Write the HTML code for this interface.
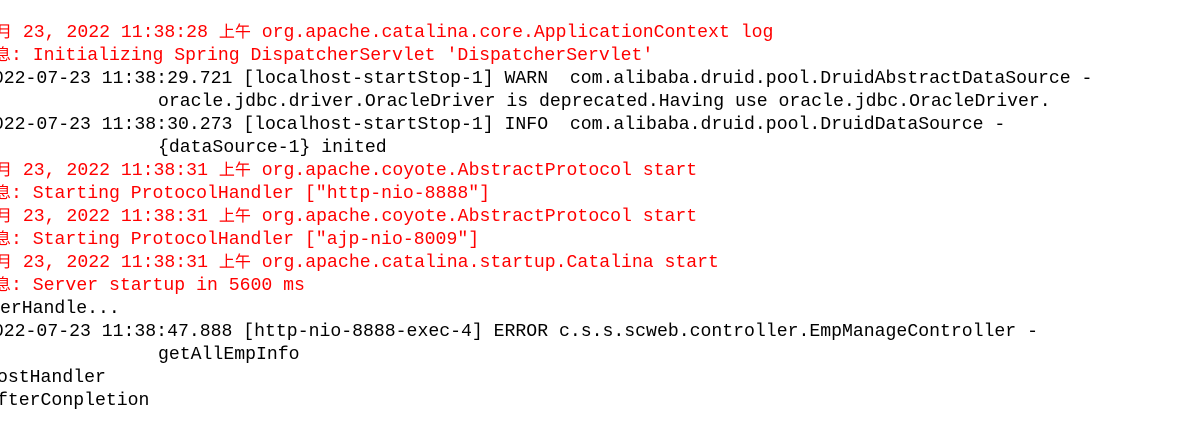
<!DOCTYPE html>
<html><head><meta charset="utf-8"><style>
html,body{margin:0;padding:0;background:#fff;width:1194px;height:432px;overflow:hidden;position:relative}
.w{position:absolute;left:0;top:2px;width:1194px;height:430px}
.l{position:absolute;white-space:pre;font-family:"Liberation Mono",monospace;font-size:18.15px;line-height:23px;height:23px;color:#000}
.r{color:#f00}
.c,.c2{display:inline-block;line-height:16px;height:16px;font-family:"Noto Sans CJK SC",sans-serif;font-size:16px;overflow:visible}
.c{width:16px}
.c2{width:32px}
</style></head><body><div class="w">
<div class="l r" style="top:20px;left:-4px"><span class="c">月</span> 23, 2022 11:38:28 <span class="c2">上午</span> org.apache.catalina.core.ApplicationContext log</div>
<div class="l r" style="top:43px;left:-5px"><span class="c">息</span>: Initializing Spring DispatcherServlet 'DispatcherServlet'</div>
<div class="l" style="top:66px;left:-18px">2022-07-23 11:38:29.721 [localhost-startStop-1] WARN  com.alibaba.druid.pool.DruidAbstractDataSource -</div>
<div class="l" style="top:89px;left:158px">oracle.jdbc.driver.OracleDriver is deprecated.Having use oracle.jdbc.OracleDriver.</div>
<div class="l" style="top:112px;left:-18px">2022-07-23 11:38:30.273 [localhost-startStop-1] INFO  com.alibaba.druid.pool.DruidDataSource -</div>
<div class="l" style="top:135px;left:158px">{dataSource-1} inited</div>
<div class="l r" style="top:158px;left:-4px"><span class="c">月</span> 23, 2022 11:38:31 <span class="c2">上午</span> org.apache.coyote.AbstractProtocol start</div>
<div class="l r" style="top:181px;left:-5px"><span class="c">息</span>: Starting ProtocolHandler ["http-nio-8888"]</div>
<div class="l r" style="top:204px;left:-4px"><span class="c">月</span> 23, 2022 11:38:31 <span class="c2">上午</span> org.apache.coyote.AbstractProtocol start</div>
<div class="l r" style="top:227px;left:-5px"><span class="c">息</span>: Starting ProtocolHandler ["ajp-nio-8009"]</div>
<div class="l r" style="top:250px;left:-4px"><span class="c">月</span> 23, 2022 11:38:31 <span class="c2">上午</span> org.apache.catalina.startup.Catalina start</div>
<div class="l r" style="top:273px;left:-5px"><span class="c">息</span>: Server startup in 5600 ms</div>
<div class="l" style="top:296px;left:0px">erHandle...</div>
<div class="l" style="top:319px;left:-18px">2022-07-23 11:38:47.888 [http-nio-8888-exec-4] ERROR c.s.s.scweb.controller.EmpManageController -</div>
<div class="l" style="top:342px;left:158px">getAllEmpInfo</div>
<div class="l" style="top:365px;left:-3px">ostHandler</div>
<div class="l" style="top:388px;left:-3px">fterConpletion</div>
</div></body></html>
